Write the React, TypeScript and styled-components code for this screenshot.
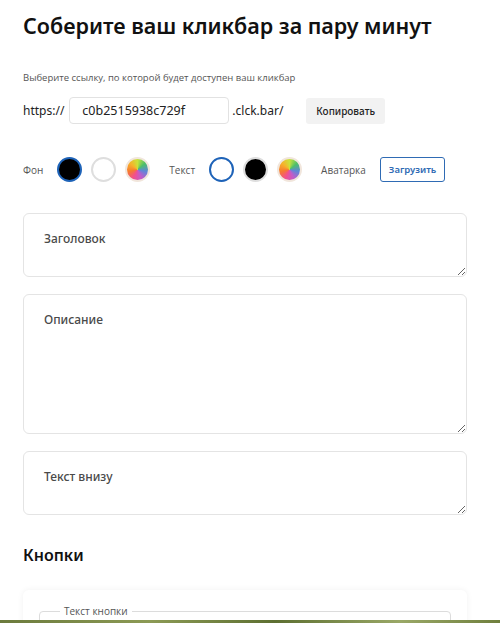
import styled, { createGlobalStyle, css } from "styled-components";

const GlobalStyle = createGlobalStyle`
  body {
    margin: 0;
    background: #ffffff;
    font-family: "Open Sans", "Noto Sans", sans-serif;
    color: #111;
  }
`;

const Page = styled.main`
  width: 444px;
  padding: 12px 0 40px 23px;
`;

const Title = styled.h1`
  margin: 0;
  font-family: "Noto Sans", sans-serif;
  font-weight: 600;
  font-size: 21.5px;
  line-height: 28px;
  color: #111;
`;

const Hint = styled.p`
  margin: 31px 0 0;
  font-size: 9.5px;
  line-height: 14px;
  color: #555;
`;

const LinkRow = styled.div`
  display: flex;
  align-items: center;
  margin-top: 12px;
  font-family: "Noto Sans", sans-serif;
  font-size: 12px;
  color: #222;
`;

const SlugInput = styled.input`
  box-sizing: border-box;
  width: 160px;
  height: 27px;
  margin: 0 3px 0 5px;
  padding: 0 12px;
  border: 1px solid #e2e2e2;
  border-radius: 4px;
  font-family: "Noto Sans", sans-serif;
  font-size: 12.5px;
  color: #222;
  outline: none;
`;

const GreyButton = styled.button`
  margin-left: 23px;
  height: 26px;
  padding: 0 10px;
  border: none;
  border-radius: 3px;
  background: #f2f2f2;
  font-family: "Noto Sans", sans-serif;
  font-weight: 500;
  font-size: 10px;
  color: #222;
`;

const ColorRow = styled.div`
  display: flex;
  align-items: center;
  margin-top: 33px;
`;

const Label = styled.span<{ $gap: number }>`
  font-size: 10px;
  color: #555;
  margin-right: ${(p) => p.$gap}px;
`;

const Swatches = styled.div`
  display: flex;
  gap: 9px;
  margin-right: 19px;
`;

const Swatch = styled.span<{ $fill: "black" | "white" | "rainbow"; $active?: boolean }>`
  box-sizing: border-box;
  width: 25px;
  height: 25px;
  border-radius: 50%;
  border: 2px solid ${(p) => (p.$active ? "#1e63b8" : "#dedede")};
  ${(p) =>
    p.$fill === "black" &&
    css`
      background: #000;
    `}
  ${(p) =>
    p.$fill === "white" &&
    css`
      background: #fff;
    `}
  ${(p) =>
    p.$fill === "rainbow" &&
    css`
      border-color: #f1e6dc;
      background: conic-gradient(
        from 0deg,
        #c9e23a,
        #4cbf6a,
        #5f86d8,
        #c35bc9,
        #f24f8e,
        #f7792f,
        #f7b22b,
        #c9e23a
      );
    `}
`;

const UploadButton = styled.button`
  height: 25px;
  margin-left: 14px;
  padding: 0 8px;
  border: 1px solid #2f6bb4;
  border-radius: 3px;
  background: #fff;
  font-family: "Noto Sans", sans-serif;
  font-weight: 600;
  font-size: 9.5px;
  color: #2f6bb4;
`;

const Fields = styled.div`
  display: flex;
  flex-direction: column;
  gap: 17px;
  margin-top: 31px;
`;

const Area = styled.textarea<{ $h: number }>`
  box-sizing: border-box;
  display: block;
  width: 444px;
  height: ${(p) => p.$h}px;
  padding: 16px 20px;
  border: 1px solid #e4e4e4;
  border-radius: 6px;
  font-family: "Noto Sans", sans-serif;
  font-size: 12px;
  font-weight: 500;
  outline: none;
  &::placeholder {
    color: #4a4a4a;
  }
`;

const SectionTitle = styled.h2`
  margin: 30px 0 0;
  font-family: "Noto Sans", sans-serif;
  font-weight: 600;
  font-size: 16px;
  line-height: 20px;
  color: #111;
`;

const Card = styled.section`
  margin-top: 25px;
  padding: 14px 16px 20px;
  border-radius: 6px;
  background: #fff;
  box-shadow: 0 0 6px rgba(0, 0, 0, 0.06);
`;

const Fieldset = styled.fieldset`
  margin: 0;
  height: 30px;
  padding: 0 20px;
  border: 1px solid #dcdcdc;
  border-radius: 4px;
`;

const Legend = styled.legend`
  padding: 0 4px;
  font-size: 10px;
  color: #555;
`;

const PhotoStrip = styled.div`
  position: fixed;
  left: 0;
  right: 0;
  bottom: 0;
  height: 3px;
  background: linear-gradient(90deg, #6b7a3c, #8c9a55 30%, #5d6f31 55%, #9aa867 80%, #6f7f3d);
`;

export default function App() {
  return (
    <>
      <GlobalStyle />
      <Page>
        <Title>Соберите ваш кликбар за пару минут</Title>
        <Hint>Выберите ссылку, по которой будет доступен ваш кликбар</Hint>
        <LinkRow>
          https://
          <SlugInput defaultValue="c0b2515938c729f" />
          .clck.bar/
          <GreyButton>Копировать</GreyButton>
        </LinkRow>
        <ColorRow>
          <Label $gap={14}>Фон</Label>
          <Swatches>
            <Swatch $fill="black" $active />
            <Swatch $fill="white" />
            <Swatch $fill="rainbow" />
          </Swatches>
          <Label $gap={14}>Текст</Label>
          <Swatches>
            <Swatch $fill="white" $active />
            <Swatch $fill="black" />
            <Swatch $fill="rainbow" />
          </Swatches>
          <Label $gap={0}>Аватарка</Label>
          <UploadButton>Загрузить</UploadButton>
        </ColorRow>
        <Fields>
          <Area $h={64} placeholder="Заголовок" />
          <Area $h={140} placeholder="Описание" />
          <Area $h={64} placeholder="Текст внизу" />
        </Fields>
        <SectionTitle>Кнопки</SectionTitle>
        <Card>
          <Fieldset>
            <Legend>Текст кнопки</Legend>
          </Fieldset>
        </Card>
      </Page>
      <PhotoStrip />
    </>
  );
}
